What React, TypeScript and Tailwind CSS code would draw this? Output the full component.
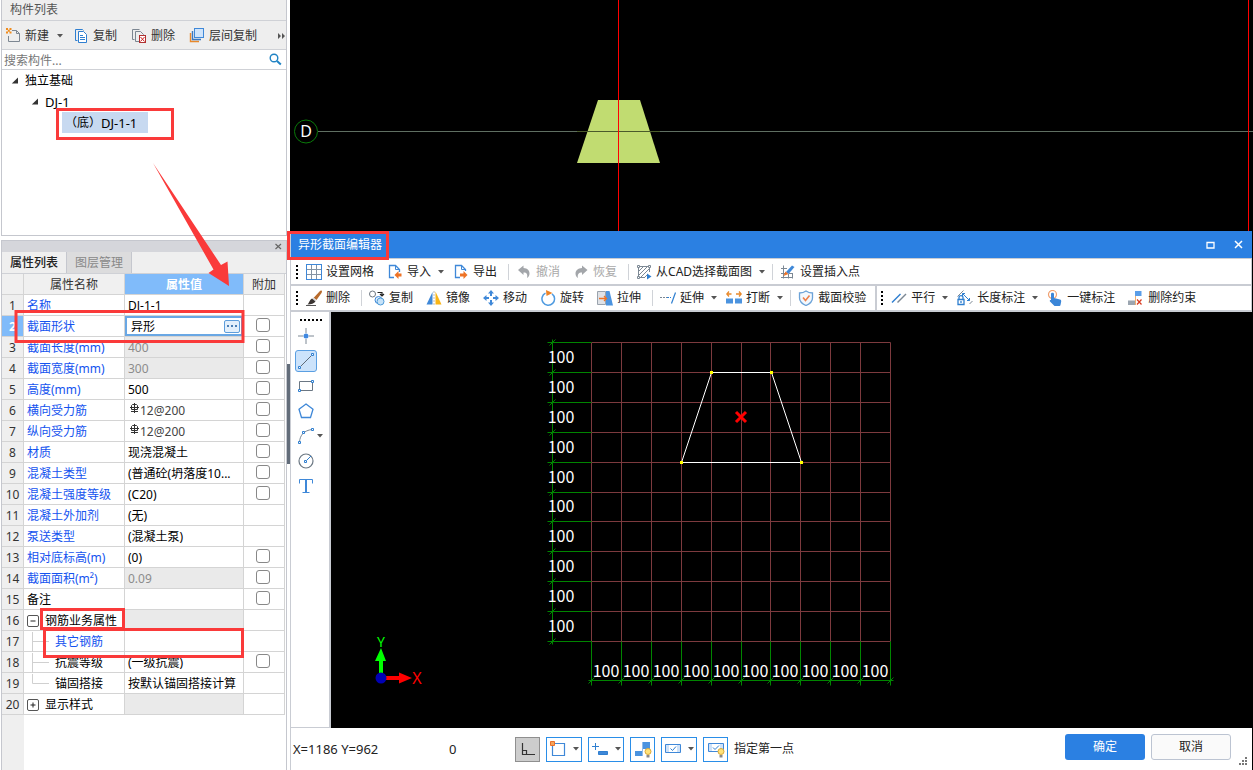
import type { ReactNode } from 'react';

interface PropertyRow {
  name: string;
  value?: string;
  link?: boolean;
  rebar?: boolean;
  disabled?: boolean;
  editing?: boolean;
  extra?: boolean;
  toggle?: '+' | '-';
  branch?: 'mid' | 'last';
}

const ROWS: PropertyRow[] = [
  { name: '名称', value: 'DJ-1-1', link: true },
  { name: '截面形状', value: '异形', link: true, editing: true, extra: true },
  { name: '截面长度(mm)', value: '400', link: true, disabled: true, extra: true },
  { name: '截面宽度(mm)', value: '300', link: true, disabled: true, extra: true },
  { name: '高度(mm)', value: '500', link: true, extra: true },
  { name: '横向受力筋', value: '12@200', link: true, rebar: true, extra: true },
  { name: '纵向受力筋', value: '12@200', link: true, rebar: true, extra: true },
  { name: '材质', value: '现浇混凝土', link: true, extra: true },
  { name: '混凝土类型', value: '(普通砼(坍落度10...', link: true, extra: true },
  { name: '混凝土强度等级', value: '(C20)', link: true, extra: true },
  { name: '混凝土外加剂', value: '(无)', link: true },
  { name: '泵送类型', value: '(混凝土泵)', link: true },
  { name: '相对底标高(m)', value: '(0)', link: true, extra: true },
  { name: '截面面积(m²)', value: '0.09', link: true, disabled: true, extra: true },
  { name: '备注', extra: true },
  { name: '钢筋业务属性', disabled: true, toggle: '-' },
  { name: '其它钢筋', link: true, branch: 'mid' },
  { name: '抗震等级', value: '(一级抗震)', extra: true, branch: 'mid' },
  { name: '锚固搭接', value: '按默认锚固搭接计算', branch: 'last' },
  { name: '显示样式', disabled: true, toggle: '+' },
];

function Icon({ children, size = 16 }: { children: ReactNode; size?: number }) {
  return (
    <svg width={size} height={size} viewBox={`0 0 ${size} ${size}`} fill="none" className="shrink-0" aria-hidden="true">
      {children}
    </svg>
  );
}

function Caret() {
  return (
    <svg width="6" height="4" viewBox="0 0 6 4" className="shrink-0" aria-hidden="true">
      <path d="M0 0h6L3 3.6z" fill="#555" />
    </svg>
  );
}

/* ---------- component list icons ---------- */

const newIcon = (
  <Icon>
    <path d="M7 2.500h4.500l3 3v8h-11V8" stroke="#7d8792" />
    <path d="M11.500 2.500v3h3" stroke="#7d8792" />
    <path d="M1 0h2v2H1zM4.500 0h2v2h-2zM2.800 1.800h2v2h-2zM1 3.500h2v2H1zM4.500 3.500h2v2h-2z" fill="#f08c1e" />
  </Icon>
);

const copyDocIcon = (
  <Icon>
    <path d="M4.500 12.500h-2v-11h7l1 1" stroke="#2f7fd0" />
    <path d="M5.500 3.500h5l3 3v8h-8z" fill="#fff" stroke="#2f7fd0" />
    <path d="M7 7.500h3M7 9.500h5M7 11.500h5" stroke="#2f7fd0" />
  </Icon>
);

const deleteDocIcon = (
  <Icon>
    <path d="M3.500 11.500h-2v-10h7" stroke="#7d8792" />
    <path d="M8 13.500H4.500v-10h5l3 3v1" stroke="#7d8792" />
    <rect x="8.500" y="7.500" width="6" height="7" fill="#fff" stroke="#b03030" />
    <path d="M9.500 9l4 4.500M13.500 9l-4 4.500" stroke="#d02020" />
  </Icon>
);

const layerIcon = (
  <Icon>
    <path d="M1.500 5v8.500H10" stroke="#e8892b" strokeWidth="1.400" />
    <path d="M3.500 3v8.500H12" stroke="#3b78c0" strokeWidth="1.400" />
    <rect x="5.500" y=".5" width="9" height="9" fill="#cfe4fb" stroke="#3f88d8" />
  </Icon>
);

/* ---------- editor toolbar icons ---------- */

const gridIcon = (
  <Icon>
    <rect x=".5" y=".5" width="15" height="15" stroke="#3f88d8" />
    <path d="M5.500 1v14M10.500 1v14M1 5.500h14M1 10.500h14" stroke="#8493a3" />
  </Icon>
);

const importIcon = (
  <Icon>
    <path d="M7 13.500H2.500v-12h6l4 4V8" stroke="#3f88d8" strokeWidth="1.300" />
    <path d="M8.500 1.500v4h4" stroke="#3f88d8" />
    <path d="M7.500 11l4-4v2.500h3v3h-3V15z" fill="#ee7326" />
  </Icon>
);

const exportIcon = (
  <Icon>
    <path d="M7 13.500H2.500v-12h6l4 4V7" stroke="#3f88d8" strokeWidth="1.300" />
    <path d="M8.500 1.500v4h4" stroke="#3f88d8" />
    <path d="M7 9.500h3.500V7l4 4-4 4v-2.500H7z" fill="#ee7326" />
  </Icon>
);

const undoIcon = (
  <Icon>
    <path d="M2 6l5.500-4.500V4c4 .2 6 2.500 6 5.500 0 2-1 3.500-2.500 4.500.8-3.500 0-5.500-3.500-5.500v2.500z" fill="#a3a6aa" />
  </Icon>
);

const redoIcon = (
  <Icon>
    <path d="M14.500 6L9 1.500V4c-4 .2-6.500 2.500-6.500 5.500 0 2 1 3.500 2.500 4.500-.8-3.500.5-5.500 4-5.500v2.500z" fill="#a3a6aa" />
  </Icon>
);

const cadIcon = (
  <Icon>
    <path d="M3 2.500h10M2.500 3v10M13.500 3v5M3 13.500h6" stroke="#7c8894" />
    <path d="M3 7l4-4M3 11l8-8M5 13l8-8M9 13l2-2" stroke="#7c8894" />
    <path d="M1.500 1.500h2v2h-2zM12.500 1.500h2v2h-2zM1.500 12.500h2v2h-2z" fill="#fff" stroke="#7c8894" />
    <path d="M11 9.500v6l4.500-3z" fill="#2f7fd0" />
  </Icon>
);

const insertPointIcon = (
  <Icon>
    <path d="M3.500 1.500v13M8.500 10v4.500M1 4.500h6M1 9.500h4M9 9.500h4M1 13.500h12M12.500 10v4.500" stroke="#7c8894" />
    <path d="M6 8l6-6.500 2.500 1.500-6 7z" fill="#3f88d8" />
    <path d="M5.500 7.500L3.500 12l5-2z" fill="#ee7326" />
  </Icon>
);

const brushIcon = (
  <Icon>
    <path d="M15.500.5c.8.5.5 1.500 0 2.500L10.500 10 7.500 8 13.500 1.500c.7-.8 1.300-1.200 2-1z" fill="#b86b2c" />
    <path d="M7.500 7.500l3 2.500-1 1.500-3.500-2.500z" fill="#d8d8d8" />
    <path d="M6 8.500l3.500 3c-1.500 2-4 3-8 3C3 13 3.500 10 6 8.500z" fill="#3b3532" />
    <path d="M0 15.500h10" stroke="#555" />
  </Icon>
);

const copyIcon = (
  <Icon>
    <circle cx="3.500" cy="4" r="3" stroke="#6d7680" />
    <circle cx="9.500" cy="10" r="3.500" fill="#e0effc" stroke="#3f88d8" />
    <circle cx="11.500" cy="11.500" r="3.500" fill="#c6e2f8" stroke="#4c9ad8" />
    <path d="M8.500 2.500h4.500v3M11 4l2 2 2-2" stroke="#222" strokeWidth="1.200" />
  </Icon>
);

const mirrorIcon = (
  <Icon>
    <path d="M6.500 2v12.500H.5z" fill="#3f88d8" />
    <path d="M9.500 1.500l6 13h-6z" fill="#f9b516" />
    <path d="M8 1v14" stroke="#bbb" strokeDasharray="2 1" />
  </Icon>
);

const moveIcon = (
  <Icon>
    <path d="M8 0l3 3.500H9V6H7V3.500H5zM8 16l3-3.500H9V10H7v2.500H5zM0 8l3.500-3v2H6v2H3.500v2zM16 8l-3.500-3v2H10v2h2.500v2z" fill="#3f88d8" />
  </Icon>
);

const rotateIcon = (
  <Icon>
    <path d="M5.500 3.200a6.300 6.300 0 1 0 6.500.6" stroke="#4f9be0" strokeWidth="1.500" />
    <path d="M6 0l6.500 3L6.500 6z" fill="#ee8326" />
  </Icon>
);

const stretchIcon = (
  <Icon>
    <path d="M.5 1.500h8v13h-8z" fill="#dfe2e7" stroke="#9aa3ad" />
    <path d="M9 1h3.500L16 15.500H9z" fill="#4b93df" />
    <path d="M2 8.500h7M7 6L9.500 8.500 7 11" stroke="#ee7326" strokeWidth="1.300" />
  </Icon>
);

const extendIcon = (
  <Icon>
    <path d="M0 7.500h7" stroke="#7c8894" strokeDasharray="2 1" />
    <path d="M7 7.500h4" stroke="#2f7fd0" strokeDasharray="2 1" />
    <path d="M15.500 2.500l-4 11" stroke="#2f7fd0" strokeWidth="1.200" />
  </Icon>
);

const breakIcon = (
  <Icon>
    <path d="M0 8.500h7v5H0zM9 8.500h7v5H9z" fill="#4b93df" />
    <path d="M.5 4h5M3 1.500L.8 4 3 6.500M10 4h5M13 1.500L15.200 4 13 6.500" stroke="#e8892b" strokeWidth="1.300" />
  </Icon>
);

const shieldIcon = (
  <Icon>
    <path d="M8 1c2 1.500 4 2 6.500 2v5c0 3.500-3 6-6.500 7.500C4.500 14 1.500 11.500 1.500 8V3C4 3 6 2.500 8 1z" fill="#f3f8fd" stroke="#6ba2d8" strokeWidth="1.300" />
    <path d="M5 7.500l2.500 3L11.500 5.500" stroke="#ee7f4a" strokeWidth="1.600" />
  </Icon>
);

const parallelIcon = (
  <Icon>
    <path d="M1 12.500L9.500 4" stroke="#2f7fd0" strokeWidth="1.400" />
    <path d="M6.500 12.500L15 4" stroke="#7c8894" strokeWidth="1.400" />
  </Icon>
);

const lengthIcon = (
  <Icon>
    <path d="M.5 6.500l6-6" stroke="#7c8894" />
    <path d="M5.500 3.500l7 7M5.500 6V3.500H8M12.500 8v2.500H10" stroke="#2f7fd0" />
    <path d="M12.500 14l3-3" stroke="#7c8894" />
    <path d="M1 9.500h6v5H1z" fill="#fff" stroke="#2f7fd0" strokeWidth="1.300" />
    <path d="M2 9V7.500c0-2.500 4-2.500 4 0V9M4 11v2" stroke="#2f7fd0" strokeWidth="1.300" />
  </Icon>
);

const touchIcon = (
  <Icon>
    <circle cx="5.500" cy="4.500" r="4" stroke="#f0a070" strokeWidth="1.200" />
    <path d="M4 4c0-1.700 3-1.700 3 0v4l6 1.500c1 .3 1.300 1 1.200 2L13.500 15c-.1.600-.5 1-1 1H7.500L3 11.500c-.7-1 .2-1.800 1-1.500z" fill="#3b86d8" />
  </Icon>
);

const removeConstraintIcon = (
  <Icon>
    <path d="M7 1h6.500v5H7z" fill="#5b9ee8" />
    <path d="M0 10.500h7v4.500H0z" fill="#9ba5b0" />
    <path d="M7.500 6v9" stroke="#f0b070" />
    <path d="M9 9.500l4.500 5M13.500 9.500l-4.500 5" stroke="#d83a20" strokeWidth="1.200" />
  </Icon>
);

function ToolButton({ icon, label, caret, muted }: { icon: ReactNode; label: string; caret?: boolean; muted?: boolean }) {
  return (
    <button
      type="button"
      disabled={muted}
      className={`flex h-5 items-center gap-1 rounded-sm pl-1 whitespace-nowrap ${caret ? 'pr-1' : 'pr-2'} ${muted ? 'text-[#a9a9a9]' : 'text-[#222]'}`}
    >
      {icon}
      {label}
      {caret && (
        <span className="ml-[3px]">
          <Caret />
        </span>
      )}
    </button>
  );
}

function Separator() {
  return <span className="mx-0.5 h-4 w-px bg-[#d0d3d8]" />;
}

function Grip() {
  return (
    <span className="mx-[3px] flex flex-col gap-0.5">
      {[0, 1, 2, 3].map((i) => (
        <span key={i} className="h-0.5 w-0.5 bg-black" />
      ))}
    </span>
  );
}

function ComponentList() {
  return (
    <section className="flex h-[236px] flex-col border-x border-b border-[#c5c7ce]">
      <h2 className="flex h-[21px] items-center border-b border-[#cfd1d6] bg-[#eeeeee] pl-2 text-[#555]">构件列表</h2>
      <div className="flex h-[29px] items-center gap-2.5 border-b border-[#cfd1d6] bg-[#eeeeee] pt-0.5 pl-[3px] text-[#333]">
        <button type="button" className="flex items-center gap-1">
          {newIcon}
          新建
          <span className="ml-1">
            <Caret />
          </span>
        </button>
        <button type="button" className="flex items-center gap-1 pr-1">
          {copyDocIcon}
          复制
        </button>
        <button type="button" className="flex items-center gap-1 pr-1">
          {deleteDocIcon}
          删除
        </button>
        <button type="button" className="flex items-center gap-1 pr-1">
          {layerIcon}
          层间复制
        </button>
        <button type="button" aria-label="更多" className="ml-auto">
          <svg width="9" height="6" viewBox="0 0 9 6" aria-hidden="true">
            <path d="M1 0v6l3-3zM5 0v6l3-3z" fill="#555" />
          </svg>
        </button>
      </div>
      <div className="flex h-5 items-center border-b border-[#cfd1d6] pr-1">
        <input aria-label="搜索构件" placeholder="搜索构件..." className="h-full min-w-0 flex-1 pt-0.5 pl-0.5 outline-none placeholder:text-[#777]" />
        <svg width="13" height="13" viewBox="0 0 13 13" fill="none" aria-hidden="true">
          <circle cx="5" cy="5" r="3.800" stroke="#2083c4" strokeWidth="1.400" />
          <path d="M8 8l3.800 3.500" stroke="#2083c4" strokeWidth="2" />
        </svg>
      </div>
      <ul className="text-black">
        <li className="flex h-[21px] items-center gap-1.5 pl-[9px]">
          <svg width="8" height="7" viewBox="0 0 8 7" aria-hidden="true">
            <path d="M7 .5v6H.8z" fill="#333" />
          </svg>
          独立基础
        </li>
        <li className="flex h-[21px] items-center gap-1.5 pl-[29px] text-[13px]">
          <svg width="8" height="7" viewBox="0 0 8 7" aria-hidden="true">
            <path d="M7 .5v6H.8z" fill="#333" />
          </svg>
          DJ-1
        </li>
        <li className="flex h-[21px] items-center pl-[60px]">
          <span className="flex h-[21px] w-[86px] items-center bg-[#c7d9f0] pl-[3px]">
            （底）<span className="text-[13px]">DJ-1-1</span>
          </span>
        </li>
      </ul>
    </section>
  );
}

function RebarMark() {
  return (
    <svg width="11" height="11" viewBox="0 0 11 11" fill="none" className="mr-px inline-block align-[1px]" aria-hidden="true">
      <path d="M6.500 0v10M3 8.500h7M2 4.500h9" stroke="#333" />
      <path d="M4.500 1.500h4l1 1v4h-6v-4z" stroke="#333" />
    </svg>
  );
}

function NameCell({ row }: { row: PropertyRow }) {
  if (row.toggle) {
    return (
      <div className="flex items-center gap-1.5">
        <button type="button" aria-label={row.name} className="flex h-3 w-3 items-center justify-center rounded-[2px] border border-[#555] bg-white">
          <svg width="6" height="6" viewBox="0 0 6 6" aria-hidden="true">
            <path d={row.toggle === '+' ? 'M.5 3h5M3 .5v5' : 'M.5 3h5'} stroke="#222" />
          </svg>
        </button>
        {row.name}
      </div>
    );
  }
  if (row.branch) {
    return (
      <div className="flex h-4 items-center gap-1.5 pl-[5px]">
        <svg width="17" height="20" viewBox="0 0 17 20" fill="none" className="shrink-0" aria-hidden="true">
          <path d={row.branch === 'last' ? 'M.5 0v9.500H17' : 'M.5 0v20M.5 9.500H17'} stroke="#d0d0d0" />
        </svg>
        {row.name}
      </div>
    );
  }
  return <>{row.name}</>;
}

function PropertyPanel() {
  return (
    <section className="mt-1 flex flex-1 flex-col border-x border-t border-[#c5c7ce]">
      <div className="flex h-[11px] items-center justify-end bg-[#d5d6db] pr-1">
        <button type="button" aria-label="关闭面板">
          <svg width="7" height="7" viewBox="0 0 7 7" className="block" aria-hidden="true">
            <path d="M.5 1l5.500 5M6 1L.5 6" stroke="#666" strokeWidth="1.200" />
          </svg>
        </button>
      </div>
      <div className="flex h-[22px] border-b border-[#cfd1d6] bg-[#efefef]">
        <button type="button" className="w-[65px] border-r border-[#c5c7ce] font-medium text-[#222]">
          属性列表
        </button>
        <button type="button" className="w-[65px] border-r border-[#c5c7ce] bg-[#dcdcdd] text-[#888]">
          图层管理
        </button>
      </div>
      <table className="w-[283px] table-fixed border-separate border-spacing-0">
        <colgroup>
          <col className="w-[22px]" />
          <col className="w-[101px]" />
          <col className="w-[119px]" />
          <col className="w-[41px]" />
        </colgroup>
        <thead>
          <tr className="text-[#333]">
            <td className="h-[21px] border-r border-b border-[#d4d4d4] bg-[#f0f0f0]" />
            <th className="border-r border-b border-[#d4d4d4] bg-[#f0f0f0] pt-0.5 font-normal">属性名称</th>
            <th className="border-r border-b border-[#d4d4d4] bg-[#80bbfa] pt-0.5 font-bold text-white">属性值</th>
            <th className="border-r border-b border-[#d4d4d4] bg-[#f0f0f0] pt-0.5 font-normal">附加</th>
          </tr>
        </thead>
        <tbody>
          {ROWS.map((row, i) => (
            <tr key={row.name}>
              <td
                className={`h-[21px] border-r border-b border-[#d4d4d4] pt-0.5 text-center ${row.editing ? 'bg-[#80bbfa] font-bold text-white' : 'bg-[#efefef] text-[#333]'}`}
              >
                {i + 1}
              </td>
              <td className={`border-r border-b border-[#d4d4d4] pt-0.5 pl-[3px] whitespace-nowrap ${row.link ? 'text-[#1453ef]' : 'text-black'}`}>
                <NameCell row={row} />
              </td>
              {row.editing ? (
                <td className="border-r border-b border-[#d4d4d4]">
                  <div className="flex h-5 items-center border-2 border-[#69a7e4] pr-px">
                    <input aria-label={row.name} defaultValue={row.value} className="h-4 min-w-0 flex-1 pt-0.5 pl-1 text-black outline-none" />
                    <button type="button" aria-label="选择" className="flex h-[13px] w-4 items-center justify-center gap-0.5 rounded-[2px] border border-[#5d9ddb] bg-[#e3effb]">
                      {[0, 1, 2].map((n) => (
                        <span key={n} className="h-0.5 w-0.5 bg-[#4b7fb5]" />
                      ))}
                    </button>
                  </div>
                </td>
              ) : (
                <td
                  className={`border-r border-b border-[#d4d4d4] pt-0.5 pl-[3px] whitespace-nowrap ${row.disabled ? 'bg-[#eaeaea] text-[#8c8c8c]' : row.rebar ? 'text-[#444]' : 'text-black'}`}
                >
                  {row.rebar && <RebarMark />}
                  {row.value}
                </td>
              )}
              <td className="border-r border-b border-[#d4d4d4]">
                {row.extra && (
                  <input type="checkbox" aria-label={`附加 ${row.name}`} className="mb-0.5 ml-3 block h-3.5 w-3.5 appearance-none rounded-[3px] border border-[#888] bg-white" />
                )}
              </td>
            </tr>
          ))}
        </tbody>
      </table>
      <div className="w-[22px] flex-1 bg-[#efefef]" />
    </section>
  );
}

function ModelView() {
  return (
    <svg className="block h-[231px] w-full bg-black" aria-hidden="true">
      <path d="M308 100h42l20 63h-83z" fill="#c1dc71" />
      <path d="M28 131.500h935" stroke="#5f6f62" />
      <path d="M287 131.500h83" stroke="#4a5a2a" />
      <path d="M328.500 0v231M958.500 0v231" stroke="#f00" />
      <circle cx="16" cy="131.500" r="11.500" fill="none" stroke="#0a7a0a" />
      <text x="16" y="137" textAnchor="middle" fontSize="16" fill="#fff">
        D
      </text>
    </svg>
  );
}

const STEP = 29.9;
const LINES = Array.from({ length: 11 }, (_, i) => Math.round(i * STEP));
const CELLS = Array.from({ length: 10 }, (_, i) => Math.round((i + 0.5) * STEP));

function SectionCanvas() {
  return (
    <svg className="block min-h-[400px] min-w-0 flex-1 bg-black" aria-label="截面绘图区">
      <g transform="translate(260.5 30.5)" fill="none">
        <g stroke="#7d3a3e">
          {LINES.map((p) => (
            <path key={p} d={`M${p} 0v299M0 ${p}h299`} />
          ))}
        </g>
        <g stroke="#008500">
          <path d="M-39 -3v305M-3 338h305" />
          {LINES.map((p) => (
            <path key={p} d={`M-44 ${p}H0M-42 ${p + 3}l6 -6M${p} 299v44M${p - 3} 341l6 -6`} />
          ))}
        </g>
        <path d="M120 30h60l30 90H90z" stroke="#fff" />
        <path d="M118.500 28.500h3v3h-3zM178.500 28.500h3v3h-3zM88.500 118.500h3v3h-3zM208.500 118.500h3v3h-3z" fill="#ff0" />
        <path d="M144.500 69.500l10 10M154.500 69.500l-10 10" stroke="#f00" strokeWidth="3" />
      </g>
      <g fill="#fff" fontSize="16" textAnchor="middle" className="font-['Noto_Sans_CJK_SC',sans-serif]">
        {CELLS.map((p) => (
          <text key={`v${p}`} x="230" y={p + 36}>
            100
          </text>
        ))}
        {CELLS.map((p) => (
          <text key={`h${p}`} x={p + 260} y="365">
            100
          </text>
        ))}
      </g>
      <path d="M48 361v-12h-4l6-13 5 13h-3v12z" fill="#0f0" />
      <path d="M55 364h13v-3.500l13 5.500-13 5.500v-3.500H55z" fill="#f00" />
      <circle cx="50" cy="366" r="5.500" fill="#0000b4" />
      <text x="50" y="335" textAnchor="middle" fontSize="14" fill="#0f0">
        Y
      </text>
      <text x="86" y="372" textAnchor="middle" fontSize="16" fill="#f00">
        X
      </text>
    </svg>
  );
}

const DRAW_TOOLS = [
  {
    label: '点',
    icon: (
      <Icon>
        <path d="M8 0v5M8 11v5M0 8h5M11 8h5" stroke="#7c8894" />
        <circle cx="8" cy="8" r="2.500" fill="#3f88e0" />
      </Icon>
    ),
  },
  {
    label: '直线',
    active: true,
    icon: (
      <Icon>
        <path d="M3 13L13 3" stroke="#5f6b78" />
        <path d="M.5 13.500h2v2h-2zM13.500.5h2v2h-2z" fill="#fff" stroke="#2f7fd0" />
      </Icon>
    ),
  },
  {
    label: '矩形',
    icon: (
      <Icon>
        <path d="M1.500 3.500h13v9h-13z" stroke="#6b7783" />
        <path d="M.5 11.500h2v2h-2zM13.500 2.500h2v2h-2z" fill="#fff" stroke="#2f7fd0" />
      </Icon>
    ),
  },
  {
    label: '多边形',
    icon: (
      <Icon>
        <path d="M8 1l7 5.200L12.500 14.500h-9L1 6.200z" stroke="#3f88d8" strokeWidth="1.300" />
      </Icon>
    ),
  },
  {
    label: '弧线',
    caret: true,
    icon: (
      <Icon>
        <path d="M1.500 14C2 7 6 2.500 14 1.500" stroke="#7c8894" />
        <path d="M.5 13.500h2v2h-2zM4.500 3.500h2v2h-2zM13.500.5h2v2h-2z" fill="#fff" stroke="#2f7fd0" />
      </Icon>
    ),
  },
  {
    label: '圆',
    icon: (
      <Icon>
        <circle cx="8" cy="8" r="7" stroke="#6b7783" strokeWidth="1.200" />
        <path d="M9 7l4-4" stroke="#2f7fd0" />
        <path d="M6.500 7.500h2v2h-2z" fill="#fff" stroke="#2f7fd0" />
      </Icon>
    ),
  },
  {
    label: '文字',
    icon: (
      <Icon>
        <path d="M1.500 5.500V1.500h13v4" stroke="#3f88d8" />
        <path d="M8 1.500v13" stroke="#3f88d8" strokeWidth="2" />
        <path d="M4.500 14.500h7" stroke="#3f88d8" />
      </Icon>
    ),
  },
];

function DrawToolbar() {
  return (
    <div className="flex w-10 shrink-0 flex-col border-r-2 border-b border-[#c9ccd3] bg-white pt-[7px] pl-1">
      <div className="mb-1 ml-[5px] flex gap-0.5">
        {[0, 1, 2, 3, 4, 5].map((i) => (
          <span key={i} className="h-0.5 w-0.5 bg-black" />
        ))}
      </div>
      <div className="flex flex-col gap-[3px]">
        {DRAW_TOOLS.map((tool) => (
          <button
            key={tool.label}
            type="button"
            aria-label={tool.label}
            className={`flex h-[22px] items-center rounded-[3px] border ${tool.caret ? 'w-[30px] gap-[3px] pl-0.5' : 'w-[22px] justify-center'} ${tool.active ? 'border-[#5a9fe2] bg-[#cce3fb]' : 'border-transparent'}`}
          >
            {tool.icon}
            {tool.caret && <Caret />}
          </button>
        ))}
      </div>
    </div>
  );
}

const bulb = (
  <>
    <circle cx="14" cy="11.500" r="3" fill="#ffe27a" stroke="#d8a93a" />
    <path d="M12.500 15h3v2.500h-3z" fill="#8a8a8a" />
  </>
);

const SNAP_TOOLS = [
  {
    label: '捕捉点',
    caret: true,
    icon: (
      <Icon size={18}>
        <path d="M3.500 3.500h12v12h-12z" stroke="#3f88d8" strokeWidth="1.200" />
        <path d="M1.500 1.500h4v4h-4z" fill="#f5a45c" stroke="#e8702a" />
      </Icon>
    ),
  },
  {
    label: '偏移',
    caret: true,
    icon: (
      <Icon size={18}>
        <path d="M1 6.500h7M4.500 3v7" stroke="#2f7fd0" />
        <path d="M7.500 11.500h9v3h-9z" fill="#3f88d8" stroke="#2f7fd0" />
      </Icon>
    ),
  },
  {
    label: '约束显示',
    icon: (
      <Icon size={18}>
        <path d="M9 2h7v7H9zM1 11h8v5H1z" fill="#4b93df" />
        <path d="M8.500 2v14" stroke="#8fbcec" />
        {bulb}
      </Icon>
    ),
  },
  {
    label: '标注',
    caret: true,
    icon: (
      <Icon size={18}>
        <path d="M1.500 4.500h15v8h-15z" fill="#cfe2f8" stroke="#3f88d8" />
        <path d="M5 5h8v7H5z" fill="#fff" />
        <path d="M6.500 8.500l2 2 3.500-4" stroke="#2f7fd0" />
      </Icon>
    ),
  },
  {
    label: '标注显示',
    icon: (
      <Icon size={18}>
        <path d="M1.500 3.500h15v8h-15z" fill="#cfe2f8" stroke="#3f88d8" />
        <path d="M5 4h8v7H5z" fill="#fff" />
        <path d="M6 7.500l2 2 4-4" stroke="#2f7fd0" />
        {bulb}
      </Icon>
    ),
  },
];

function StatusBar() {
  return (
    <footer className="flex h-[42px] items-center bg-white pl-0.5 text-[#222]">
      <output className="w-[156px] text-[13px]">X=1186 Y=962</output>
      <output className="w-[66px] text-[13px]">0</output>
      <div className="flex items-center gap-1.5">
        <button type="button" aria-label="正交" className="flex h-[25px] w-[25px] items-center justify-center border border-[#8f8f8f] bg-[#cdcdcd]">
          <Icon>
            <path d="M2.500 2v11.500H15M2.500 9.500h4v4" stroke="#333" strokeWidth="1.200" />
          </Icon>
        </button>
        {SNAP_TOOLS.map((tool) => (
          <button
            key={tool.label}
            type="button"
            aria-label={tool.label}
            className={`flex h-[25px] items-center border border-[#2a8ee8] bg-white ${tool.caret ? 'w-9 gap-1.5 pl-0.5' : 'w-[25px] justify-center'}`}
          >
            {tool.icon}
            {tool.caret && <Caret />}
          </button>
        ))}
      </div>
      <span className="ml-1.5">指定第一点</span>
      <div className="mr-[21px] mb-1 ml-auto flex gap-1.5">
        <button type="button" className="h-[26px] w-20 rounded-[3px] bg-[#2b80e2] text-white">
          确定
        </button>
        <button type="button" className="h-[26px] w-20 rounded-[3px] border border-[#bcc4d2] bg-[#fafafa]">
          取消
        </button>
      </div>
      <svg width="9" height="9" viewBox="0 0 9 9" className="absolute right-1 bottom-1" aria-hidden="true">
        <path d="M6 0h2v2H6zM3 3h2v2H3zM6 3h2v2H6zM0 6h2v2H0zM3 6h2v2H3zM6 6h2v2H6z" fill="#777" />
      </svg>
    </footer>
  );
}

function SectionEditor() {
  return (
    <section className="relative mr-px flex flex-1 flex-col border-l border-[#c9ccd3] bg-white">
      <header className="flex h-[27px] items-center bg-[#2b80e2] pl-[7px] text-white">
        <h1>异形截面编辑器</h1>
        <div className="mr-[9px] ml-auto flex items-center gap-[19px]">
          <button type="button" aria-label="最大化">
            <svg width="9" height="8" viewBox="0 0 9 8" fill="none" className="block" aria-hidden="true">
              <path d="M1 1.500h7v5.500H1z" stroke="#fff" strokeWidth="1.300" />
            </svg>
          </button>
          <button type="button" aria-label="关闭">
            <svg width="9" height="9" viewBox="0 0 9 9" fill="none" className="block" aria-hidden="true">
              <path d="M1 1l7 7M8 1L1 8" stroke="#fff" strokeWidth="1.500" />
            </svg>
          </button>
        </div>
      </header>
      <div className="flex h-7 items-center gap-px border-t border-r border-b-2 border-[#c9ccd3] pl-0.5">
        <Grip />
        <ToolButton icon={gridIcon} label="设置网格" />
        <ToolButton icon={importIcon} label="导入" caret />
        <ToolButton icon={exportIcon} label="导出" />
        <Separator />
        <ToolButton icon={undoIcon} label="撤消" muted />
        <ToolButton icon={redoIcon} label="恢复" muted />
        <Separator />
        <ToolButton icon={cadIcon} label="从CAD选择截面图" caret />
        <Separator />
        <ToolButton icon={insertPointIcon} label="设置插入点" />
      </div>
      <div className="flex h-[26px] items-center gap-px border-r border-b-2 border-[#c9ccd3] pl-0.5">
        <Grip />
        <ToolButton icon={brushIcon} label="删除" />
        <Separator />
        <ToolButton icon={copyIcon} label="复制" />
        <ToolButton icon={mirrorIcon} label="镜像" />
        <ToolButton icon={moveIcon} label="移动" />
        <ToolButton icon={rotateIcon} label="旋转" />
        <ToolButton icon={stretchIcon} label="拉伸" />
        <Separator />
        <ToolButton icon={extendIcon} label="延伸" caret />
        <ToolButton icon={breakIcon} label="打断" caret />
        <Separator />
        <ToolButton icon={shieldIcon} label="截面校验" />
        <span className="w-0.5 self-stretch bg-[#c9ccd3]" />
        <Grip />
        <ToolButton icon={parallelIcon} label="平行" caret />
        <ToolButton icon={lengthIcon} label="长度标注" caret />
        <ToolButton icon={touchIcon} label="一键标注" />
        <ToolButton icon={removeConstraintIcon} label="删除约束" />
      </div>
      <div className="flex flex-1">
        <DrawToolbar />
        <SectionCanvas />
      </div>
      <StatusBar />
    </section>
  );
}

/* Red call-outs drawn over both panels */
function Callouts() {
  return (
    <svg width="400" height="670" viewBox="0 0 400 670" fill="none" className="pointer-events-none absolute top-0 left-0" aria-hidden="true">
      <g stroke="#fa3a3a" strokeWidth="3">
        <rect x="57.500" y="109.500" width="115" height="29" />
        <rect x="16" y="311.500" width="227" height="30" />
        <rect x="41.500" y="609.500" width="82" height="19" />
        <rect x="44.500" y="629.500" width="198" height="27" />
        <rect x="288.500" y="232.500" width="99" height="26" />
      </g>
      <path d="M153 163L221 265l6.500-3.500L229 286l-20.500-13 5-3.500z" fill="#fa3a3a" />
    </svg>
  );
}

export default function App() {
  return (
    <main className="relative flex min-h-screen bg-black font-['Noto_Sans','Noto_Sans_CJK_SC',sans-serif] text-[12px] leading-4">
      <aside className="flex w-[287px] shrink-0 flex-col bg-white pl-px">
        <ComponentList />
        <PropertyPanel />
      </aside>
      <div className="w-[3px] shrink-0 bg-white pt-[364px]">
        <div className="h-[100px] bg-[#626c79]" />
      </div>
      <div className="flex min-w-0 flex-1 flex-col">
        <ModelView />
        <SectionEditor />
      </div>
      <Callouts />
    </main>
  );
}
